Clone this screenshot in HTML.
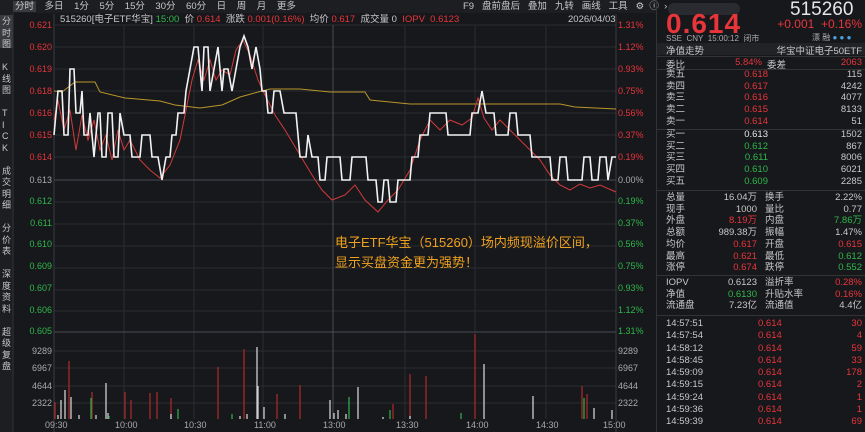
<!DOCTYPE html>
<html><head><meta charset="utf-8"><style>
body{margin:0;width:865px;height:432px;background:#17181c;overflow:hidden;font-family:"Liberation Sans","Noto Sans CJK SC",sans-serif;color:#c8c8c8;font-size:10px;position:relative}
.a{position:absolute;white-space:nowrap}
.r{color:#e8353a}.g{color:#2fb84a}.w{color:#e6e6e6}.gr{color:#aaa}
.rt{text-align:right}
</style></head><body>
<div class="a" style="left:0;top:0;width:657px;height:13px;background:#1d1e22"></div>
<div class="a" style="left:13px;top:1px;width:23px;height:11px;background:#3a3b40"></div>
<div class="a" style="left:15px;top:0px;font-size:9.5px;line-height:13px">分时&nbsp;&nbsp;&nbsp;&nbsp;多日&nbsp;&nbsp;&nbsp;&nbsp;1分&nbsp;&nbsp;&nbsp;&nbsp;5分&nbsp;&nbsp;&nbsp;&nbsp;15分&nbsp;&nbsp;&nbsp;&nbsp;30分&nbsp;&nbsp;&nbsp;&nbsp;60分&nbsp;&nbsp;&nbsp;&nbsp;日&nbsp;&nbsp;&nbsp;&nbsp;周&nbsp;&nbsp;&nbsp;&nbsp;月&nbsp;&nbsp;&nbsp;&nbsp;更多</div>
<div class="a" style="left:463px;top:0;font-size:9.5px;line-height:13px">F9&nbsp;&nbsp;&nbsp;盘前盘后&nbsp;&nbsp;&nbsp;叠加&nbsp;&nbsp;&nbsp;九转&nbsp;&nbsp;&nbsp;画线&nbsp;&nbsp;&nbsp;工具&nbsp;&nbsp;&nbsp;⚙&nbsp;&nbsp;ⓘ&nbsp;&nbsp;›</div>
<div class="a" style="left:0;top:13px;width:13px;height:419px;background:#1d1e22"></div>
<div class="a" style="left:0;top:15px;width:13px;height:33px;background:#3a3b40"></div>
<div class="a" style="left:2px;top:16px;font-size:9px;line-height:11.5px;width:10px;white-space:normal">分时图<br><br>K线图<br><br>T<br>I<br>C<br>K<br><br>成交明细<br><br>分价表<br><br>深度资料<br><br>超级复盘</div>
<div class="a" style="left:60px;top:13px;font-size:9.5px;line-height:13px">515260[电子ETF华宝] <span class="g">15:00</span>&nbsp; 价 <span class="r">0.614</span>&nbsp; 涨跌 <span class="r">0.001(0.16%)</span>&nbsp; 均价 <span class="r">0.617</span>&nbsp; 成交量 0&nbsp; <span class="r">IOPV&nbsp; 0.6123</span></div>
<div class="a" style="left:568px;top:13px;font-size:9.5px;line-height:13px">2026/04/03</div>
<svg class="a" style="left:0;top:0" width="657" height="432">
<g stroke="#2a2c31" stroke-width="1">
<line x1="54" y1="25" x2="616" y2="25"/><line x1="54" y1="47" x2="616" y2="47"/><line x1="54" y1="69" x2="616" y2="69"/><line x1="54" y1="91" x2="616" y2="91"/><line x1="54" y1="113" x2="616" y2="113"/><line x1="54" y1="135" x2="616" y2="135"/><line x1="54" y1="157" x2="616" y2="157"/><line x1="54" y1="202" x2="616" y2="202"/><line x1="54" y1="224" x2="616" y2="224"/><line x1="54" y1="246" x2="616" y2="246"/><line x1="54" y1="268" x2="616" y2="268"/><line x1="54" y1="290" x2="616" y2="290"/><line x1="54" y1="311" x2="616" y2="311"/><line x1="54" y1="351" x2="616" y2="351"/><line x1="54" y1="368" x2="616" y2="368"/><line x1="54" y1="386" x2="616" y2="386"/><line x1="54" y1="403" x2="616" y2="403"/>
<line x1="124" y1="25" x2="124" y2="419"/><line x1="194" y1="25" x2="194" y2="419"/><line x1="263" y1="25" x2="263" y2="419"/><line x1="405" y1="25" x2="405" y2="419"/><line x1="475" y1="25" x2="475" y2="419"/><line x1="546" y1="25" x2="546" y2="419"/>
</g>
<line x1="54" y1="180" x2="616" y2="180" stroke="#4a4c52"/>
<line x1="54" y1="332" x2="616" y2="332" stroke="#4a4c52"/>
<line x1="333" y1="25" x2="333" y2="419" stroke="#4a4c52"/>
<line x1="54" y1="14" x2="54" y2="432" stroke="#3a3c42"/>
<line x1="616" y1="14" x2="616" y2="432" stroke="#3a3c42"/>
<line x1="13" y1="13" x2="13" y2="432" stroke="#333"/>
<polyline fill="none" stroke="#b8962a" stroke-width="1" points="54,91 62,92 75,82 95,82 100,92 125,98 160,101 175,105 200,108 222,105 240,97 258,92 270,89 300,89 330,92 365,92 370,100 410,104 470,104 560,104 575,107 616,109"/>
<polyline fill="none" stroke="#d23a3a" stroke-width="1" points="54,120 58,100 64,130 70,110 76,150 82,115 88,140 94,120 100,150 106,135 112,160 118,130 124,150 130,140 140,160 150,170 160,178 170,165 180,140 186,110 192,80 198,60 204,80 210,60 216,80 222,70 230,75 236,50 243,40 250,55 258,80 265,95 275,115 285,130 300,155 312,175 322,190 332,200 345,195 355,185 365,200 378,212 388,200 398,190 410,170 420,140 430,120 440,130 450,120 462,125 472,118 478,98 484,118 492,130 500,120 510,130 520,140 530,150 540,160 550,175 560,185 570,190 580,184 590,188 600,185 616,192"/>
<polyline fill="none" stroke="#f2f2f2" stroke-width="1.6" points="54,135 58,91 62,91 64,135 68,135 70,69 74,69 76,113 80,113 82,91 84,135 88,135 90,113 94,157 98,113 100,113 102,157 106,157 108,113 112,113 114,157 118,157 120,113 124,135 130,135 132,157 140,157 142,135 150,135 152,157 158,157 162,180 166,157 170,157 172,135 176,135 178,113 184,113 186,91 190,69 194,47 198,47 200,69 202,91 204,47 208,47 210,91 214,69 218,47 222,91 224,69 228,69 232,91 236,69 240,47 244,36 248,47 252,69 256,47 260,69 262,91 266,91 268,113 272,113 274,91 280,91 284,113 296,113 298,135 300,157 306,157 308,135 312,157 318,157 320,180 325,180 327,157 340,157 342,180 350,180 352,157 366,157 368,180 376,180 378,202 382,202 384,180 388,180 390,202 396,202 398,180 410,180 412,157 418,157 420,135 428,135 430,113 446,113 448,135 470,135 472,113 478,113 482,91 486,113 494,113 496,135 508,135 510,113 516,113 518,135 530,135 532,157 550,157 552,180 558,180 560,157 566,157 568,180 582,180 584,157 590,157 592,180 598,180 600,157 606,157 608,180 612,157 616,157"/>
<g stroke-width="1.3">
<path stroke="#a52a2a" d="M55 419V402M69 419V361M92 419V392M125 419V392M131 419V400M150 419V393M157 419V392M171 419V398M218 419V367M244 419V349M277 419V394M300 419V385M393 419V404M410 419V374M426 419V376M475 419V334M582 419V386M587 419V394"/>
<path stroke="#cfcfcf" d="M58 419V415M61 419V400M65 419V390M71 419V397M79 419V415M96 419V415M106 419V383M108 419V413M171 419V414M240 419V416M247 419V414M257 419V347M258 419V386M264 419V407M285 419V414M330 419V400M334 419V413M338 419V410M346 419V414M358 419V387M383 419V417M410 419V416M484 419V364M533 419V396M594 419V408M612 419V410"/>
<path stroke="#2fa84a" d="M91 419V398M109 419V416M178 419V409M232 419V414M349 419V397M390 419V410M461 419V413M584 419V398"/>
</g>
</svg>
<div class="a r rt" style="left:20px;top:14px;width:32px;font-size:9px;line-height:22px">0.621<br>0.620<br>0.619<br>0.618<br>0.616<br>0.615<br>0.614</div>
<div class="a gr rt" style="left:20px;top:169px;width:32px;font-size:9px;line-height:22px">0.613</div>
<div class="a g rt" style="left:20px;top:191px;width:32px;font-size:9px;line-height:21.7px">0.612<br>0.611<br>0.610<br>0.609<br>0.607<br>0.606<br>0.605</div>
<div class="a gr rt" style="left:20px;top:343px;width:32px;font-size:9px;line-height:17.3px">9289<br>6967<br>4644<br>2322</div>
<div class="a r" style="left:618px;top:14px;font-size:9px;line-height:22px">1.31%<br>1.12%<br>0.93%<br>0.75%<br>0.56%<br>0.37%<br>0.19%</div>
<div class="a gr" style="left:618px;top:169px;font-size:9px;line-height:22px">0.00%</div>
<div class="a g" style="left:618px;top:191px;font-size:9px;line-height:21.7px">0.19%<br>0.37%<br>0.56%<br>0.75%<br>0.93%<br>1.12%<br>1.31%</div>
<div class="a gr" style="left:618px;top:343px;font-size:9px;line-height:17.3px">9289<br>6967<br>4644<br>2322</div>
<div class="a gr" style="left:45px;top:420px;font-size:9px">09:30</div>
<div class="a gr" style="left:115px;top:420px;font-size:9px">10:00</div>
<div class="a gr" style="left:184px;top:420px;font-size:9px">10:30</div>
<div class="a gr" style="left:254px;top:420px;font-size:9px">11:00</div>
<div class="a gr" style="left:323px;top:420px;font-size:9px">13:00</div>
<div class="a gr" style="left:396px;top:420px;font-size:9px">13:30</div>
<div class="a gr" style="left:466px;top:420px;font-size:9px">14:00</div>
<div class="a gr" style="left:536px;top:420px;font-size:9px">14:30</div>
<div class="a gr" style="left:603px;top:420px;font-size:9px">15:00</div>
<div class="a" style="left:335px;top:233px;font-size:13px;line-height:20px;color:#f0a21e">电子ETF华宝（515260）场内频现溢价区间，<br>显示买盘资金更为强势！</div>
<div class="a" style="left:656px;top:0;width:1px;height:432px;background:#333"></div>
<div class="a" style="left:668px;top:3px;width:72px;height:12px;border-radius:6px;background:#2a2b30"></div>
<div class="a w" style="left:790px;top:-1px;font-size:19px">515260</div>
<div class="a r" style="left:666px;top:8px;font-size:28px;font-weight:bold;letter-spacing:1px">0.614</div>
<div class="a r rt" style="left:760px;top:17px;width:102px;font-size:12px">+0.001&nbsp; +0.16%</div>
<div class="a gr" style="left:666px;top:33px;font-size:8px">SSE&nbsp; CNY&nbsp; 15:00:12&nbsp; 闭市</div>
<div class="a gr" style="left:812px;top:32px;font-size:8px">漂 融 <span style="color:#4aa3e0">● ● ●</span></div>
<div class="a" style="left:657px;top:43px;width:208px;height:12px;background:#222327"></div>
<div class="a" style="left:666px;top:43px;font-size:9.5px">净值走势</div>
<div class="a rt" style="left:760px;top:43px;width:102px;font-size:9.5px">华宝中证电子50ETF</div>
<div class="a" style="left:657px;top:56px;width:208px;height:1px;background:#333"></div>
<div class="a" style="left:666px;top:57px;font-size:9.5px">委比</div><div class="a r rt" style="left:720px;top:57px;width:42px;font-size:9.5px">5.84%</div>
<div class="a" style="left:767px;top:57px;font-size:9.5px">委差</div><div class="a r rt" style="left:800px;top:57px;width:62px;font-size:9.5px">2063</div>
<div class="a" style="left:657px;top:69px;width:208px;height:1px;background:#333"></div>
<div class="a" style="left:666px;top:69px;font-size:9.5px;line-height:11.7px">卖五<br>卖四<br>卖三<br>卖二<br>卖一</div>
<div class="a r rt" style="left:720px;top:69px;width:48px;font-size:9.5px;line-height:11.7px">0.618<br>0.617<br>0.616<br>0.615<br>0.614</div>
<div class="a rt" style="left:800px;top:69px;width:62px;font-size:9.5px;line-height:11.7px">115<br>4242<br>4077<br>8133<br>51</div>
<div class="a" style="left:657px;top:129px;width:208px;height:1px;background:#333"></div>
<div class="a" style="left:666px;top:129px;font-size:9.5px;line-height:11.7px">买一<br>买二<br>买三<br>买四<br>买五</div>
<div class="a rt" style="left:720px;top:129px;width:48px;font-size:9.5px;line-height:11.7px"><span class="w">0.613</span><br><span class="g">0.612<br>0.611<br>0.610<br>0.609</span></div>
<div class="a rt" style="left:800px;top:129px;width:62px;font-size:9.5px;line-height:11.7px">1502<br>867<br>8006<br>6021<br>2285</div>
<div class="a" style="left:657px;top:190px;width:208px;height:1px;background:#333"></div>
<div class="a" style="left:666px;top:192px;font-size:9.5px;line-height:11.7px">总量<br>现手<br>外盘<br>总额<br>均价<br>最高<br>涨停</div>
<div class="a rt" style="left:690px;top:192px;width:67px;font-size:9.5px;line-height:11.7px">16.04万<br>1000<br><span class="r">8.19万</span><br>989.38万<br><span class="r">0.617<br>0.621<br>0.674</span></div>
<div class="a" style="left:765px;top:192px;font-size:9.5px;line-height:11.7px">换手<br>量比<br>内盘<br>振幅<br>开盘<br>最低<br>跌停</div>
<div class="a rt" style="left:800px;top:192px;width:62px;font-size:9.5px;line-height:11.7px">2.22%<br>0.77<br><span class="g">7.86万</span><br>1.47%<br><span class="r">0.615</span><br><span class="g">0.612<br>0.552</span></div>
<div class="a" style="left:657px;top:275px;width:208px;height:1px;background:#333"></div>
<div class="a" style="left:666px;top:277px;font-size:9.5px;line-height:11.7px">IOPV<br>净值<br>流通盘</div>
<div class="a rt" style="left:690px;top:277px;width:67px;font-size:9.5px;line-height:11.7px">0.6123<br><span class="g">0.6130</span><br>7.23亿</div>
<div class="a" style="left:765px;top:277px;font-size:9.5px;line-height:11.7px">溢折率<br>升贴水率<br>流通值</div>
<div class="a rt" style="left:800px;top:277px;width:62px;font-size:9.5px;line-height:11.7px"><span class="r">0.28%<br>0.16%</span><br>4.4亿</div>
<div class="a" style="left:657px;top:315px;width:208px;height:1px;background:#333"></div>
<div class="a" style="left:666px;top:318px;font-size:9.5px;line-height:12.3px">14:57:51<br>14:57:54<br>14:58:12<br>14:58:45<br>14:59:09<br>14:59:15<br>14:59:24<br>14:59:36<br>14:59:39</div>
<div class="a r" style="left:758px;top:318px;font-size:9.5px;line-height:12.3px">0.614<br>0.614<br>0.614<br>0.614<br>0.614<br>0.614<br>0.614<br>0.614<br>0.614</div>
<div class="a r rt" style="left:800px;top:318px;width:62px;font-size:9.5px;line-height:12.3px">30<br>4<br>59<br>33<br>178<br>2<br>1<br>1<br>69</div>
</body></html>
